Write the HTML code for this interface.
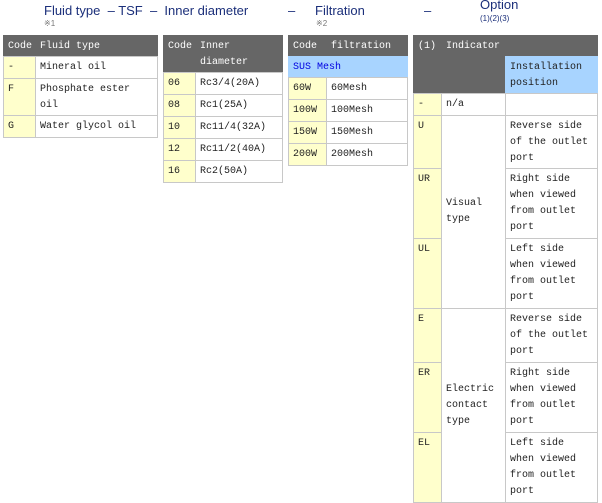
<!DOCTYPE html><html><head><meta charset="utf-8"><style>
body{margin:0;width:602px;height:503px;background:#fff;position:relative;overflow:hidden;font-family:"Liberation Mono",monospace;font-size:10px;color:#222}
.c{position:absolute;box-sizing:border-box;border:1px solid #c8c8c8;padding:3px 4px;line-height:16px}
.h{background:#666;color:#fff;border-color:#666}
.y{background:#ffffcc}
.b{background:#a8d4ff;color:#0000e0}
.t{position:absolute;font-family:"Liberation Sans",sans-serif;color:#1b2f7a;font-size:13px;white-space:nowrap}
.s{position:absolute;font-family:"Liberation Sans",sans-serif;color:#1b2f7a;font-size:8px}
</style></head><body>
<div class="t" style="left:44px;top:3px">Fluid type &nbsp;– TSF &nbsp;– &nbsp;Inner diameter</div>
<div class="t" style="left:288px;top:3px">–</div>
<div class="t" style="left:315px;top:3px">Filtration</div>
<div class="t" style="left:424px;top:3px">–</div>
<div class="t" style="left:480px;top:-3px">Option</div>
<div class="s" style="left:44px;top:19px;color:#777">※1</div>
<div class="s" style="left:316px;top:19px;color:#777">※2</div>
<div class="s" style="left:480px;top:14px">(1)(2)(3)</div>

<div class="c h" style="left:3px;top:35px;width:33px;height:22px">Code</div>
<div class="c h" style="left:35px;top:35px;width:123px;height:22px">Fluid type</div>
<div class="c y" style="left:3px;top:56px;width:33px;height:23px">-</div>
<div class="c" style="left:35px;top:56px;width:123px;height:23px">Mineral oil</div>
<div class="c y" style="left:3px;top:78px;width:33px;height:38px">F</div>
<div class="c" style="left:35px;top:78px;width:123px;height:38px">Phosphate ester oil</div>
<div class="c y" style="left:3px;top:115px;width:33px;height:23px">G</div>
<div class="c" style="left:35px;top:115px;width:123px;height:23px">Water glycol oil</div>

<div class="c h" style="left:163px;top:35px;width:33px;height:38px">Code</div>
<div class="c h" style="left:195px;top:35px;width:88px;height:38px">Inner diameter</div>
<div class="c y" style="left:163px;top:72px;width:33px;height:23px">06</div><div class="c" style="left:195px;top:72px;width:88px;height:23px">Rc3/4(20A)</div>
<div class="c y" style="left:163px;top:94px;width:33px;height:23px">08</div><div class="c" style="left:195px;top:94px;width:88px;height:23px">Rc1(25A)</div>
<div class="c y" style="left:163px;top:116px;width:33px;height:23px">10</div><div class="c" style="left:195px;top:116px;width:88px;height:23px">Rc11/4(32A)</div>
<div class="c y" style="left:163px;top:138px;width:33px;height:23px">12</div><div class="c" style="left:195px;top:138px;width:88px;height:23px">Rc11/2(40A)</div>
<div class="c y" style="left:163px;top:160px;width:33px;height:23px">16</div><div class="c" style="left:195px;top:160px;width:88px;height:23px">Rc2(50A)</div>

<div class="c h" style="left:288px;top:35px;width:39px;height:22px">Code</div>
<div class="c h" style="left:326px;top:35px;width:82px;height:22px">filtration</div>
<div class="c b" style="left:288px;top:56px;width:120px;height:22px;border-color:#a8d4ff">SUS Mesh</div>
<div class="c y" style="left:288px;top:77px;width:39px;height:23px">60W</div><div class="c" style="left:326px;top:77px;width:82px;height:23px">60Mesh</div>
<div class="c y" style="left:288px;top:99px;width:39px;height:23px">100W</div><div class="c" style="left:326px;top:99px;width:82px;height:23px">100Mesh</div>
<div class="c y" style="left:288px;top:121px;width:39px;height:23px">150W</div><div class="c" style="left:326px;top:121px;width:82px;height:23px">150Mesh</div>
<div class="c y" style="left:288px;top:143px;width:39px;height:23px">200W</div><div class="c" style="left:326px;top:143px;width:82px;height:23px">200Mesh</div>

<div class="c h" style="left:413px;top:35px;width:29px;height:59px">(1)</div>
<div class="c h" style="left:441px;top:35px;width:157px;height:59px">Indicator</div>
<div class="c b" style="left:505px;top:56px;width:93px;height:38px;color:#222;border-color:#a8d4ff">Installation position</div>
<div class="c y" style="left:413px;top:93px;width:29px;height:23px">-</div>
<div class="c" style="left:441px;top:93px;width:65px;height:23px">n/a</div>
<div class="c" style="left:505px;top:93px;width:93px;height:23px"></div>
<div class="c y" style="left:413px;top:115px;width:29px;height:54px">U</div>
<div class="c y" style="left:413px;top:168px;width:29px;height:71px">UR</div>
<div class="c y" style="left:413px;top:238px;width:29px;height:71px">UL</div>
<div class="c y" style="left:413px;top:308px;width:29px;height:55px">E</div>
<div class="c y" style="left:413px;top:362px;width:29px;height:71px">ER</div>
<div class="c y" style="left:413px;top:432px;width:29px;height:71px">EL</div>
<div class="c" style="left:441px;top:115px;width:65px;height:194px;padding-top:80px">Visual type</div>
<div class="c" style="left:441px;top:308px;width:65px;height:195px;padding-top:73px">Electric contact type</div>
<div class="c" style="left:505px;top:115px;width:93px;height:54px">Reverse side of the outlet port</div>
<div class="c" style="left:505px;top:168px;width:93px;height:71px">Right side when viewed from outlet port</div>
<div class="c" style="left:505px;top:238px;width:93px;height:71px">Left side when viewed from outlet port</div>
<div class="c" style="left:505px;top:308px;width:93px;height:55px">Reverse side of the outlet port</div>
<div class="c" style="left:505px;top:362px;width:93px;height:71px">Right side when viewed from outlet port</div>
<div class="c" style="left:505px;top:432px;width:93px;height:71px">Left side when viewed from outlet port</div>
</body></html>
